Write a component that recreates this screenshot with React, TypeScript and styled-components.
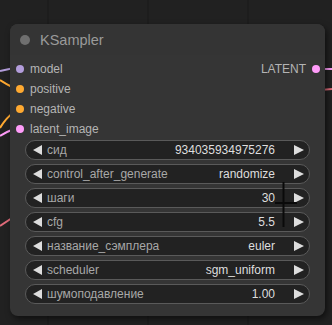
import React from "react";
import styled, { createGlobalStyle } from "styled-components";

const Global = createGlobalStyle`
  html, body { margin: 0; padding: 0; background: #202020; }
  body { font-family: "Liberation Sans", Arial, sans-serif; }
`;

const Page = styled.div`
  position: relative;
  width: 332px;
  height: 325px;
  overflow: hidden;
  background: #212121;
  padding-top: 24px;
  padding-left: 10px;
  box-sizing: border-box;
`;

const Backdrop = styled.svg`
  position: absolute;
  left: 0;
  top: 0;
  width: 332px;
  height: 325px;
`;

const Overlay = styled.svg`
  position: absolute;
  left: 0;
  top: 0;
  width: 332px;
  height: 325px;
  pointer-events: none;
`;

const Node = styled.div`
  position: relative;
  width: 315px;
  height: 292px;
  background: #353535;
  border-radius: 8px;
  box-shadow: 2px 3px 6px rgba(0, 0, 0, 0.55);
  display: flex;
  flex-direction: column;
`;

const Title = styled.div`
  height: 31px;
  display: flex;
  align-items: center;
  padding-left: 10px;
  gap: 10px;
  background: #343434;
  border-radius: 8px 8px 0 0;
  color: #9a9a9a;
  font-size: 14.5px;
`;

const TitleDot = styled.span`
  width: 10px;
  height: 10px;
  border-radius: 50%;
  background: #6f6f6f;
`;

const Slots = styled.div`
  padding-top: 4px;
  display: flex;
  flex-direction: column;
`;

const SlotRow = styled.div`
  height: 20px;
  display: flex;
  align-items: center;
  justify-content: space-between;
`;

const Slot = styled.div<{ $right?: boolean }>`
  display: flex;
  align-items: center;
  flex-direction: ${(p) => (p.$right ? "row-reverse" : "row")};
  gap: 6px;
  padding: ${(p) => (p.$right ? "0 5px 0 0" : "0 0 0 6px")};
  color: #b4b4b4;
  font-size: 12px;
`;

const Dot = styled.span<{ $c: string }>`
  width: 8px;
  height: 8px;
  border-radius: 50%;
  background: ${(p) => p.$c};
`;

const Widgets = styled.div`
  margin-top: 1px;
  padding: 0 15px;
  display: flex;
  flex-direction: column;
  gap: 4px;
`;

const Widget = styled.div`
  height: 20px;
  box-sizing: border-box;
  border: 1px solid #5a5a5a;
  border-radius: 10px;
  background: #222222;
  display: flex;
  align-items: center;
  padding: 0 5px 0 7px;
  font-size: 12px;
`;

const Arrow = styled.span<{ $dir: "l" | "r" }>`
  width: 0;
  height: 0;
  border-top: 5px solid transparent;
  border-bottom: 5px solid transparent;
  ${(p) =>
    p.$dir === "l"
      ? "border-right: 9px solid #dddddd;"
      : "border-left: 10px solid #dddddd;"}
`;

const Label = styled.span`
  margin-left: 5px;
  color: #a8a8a8;
  flex: 1;
`;

const Value = styled.span`
  color: #dedede;
  margin-right: 19px;
`;

const inputs = [
  { name: "model", color: "#b39ddb" },
  { name: "positive", color: "#ffa931" },
  { name: "negative", color: "#ffa931" },
  { name: "latent_image", color: "#ff9cf9" },
];

const widgets = [
  ["сид", "934035934975276"],
  ["control_after_generate", "randomize"],
  ["шаги", "30"],
  ["cfg", "5.5"],
  ["название_сэмплера", "euler"],
  ["scheduler", "sgm_uniform"],
  ["шумоподавление", "1.00"],
];

export default function App() {
  return (
    <>
      <Global />
      <Page>
        <Backdrop>
          <g stroke="#1c1c1c" strokeWidth="1.5">
            <line x1="48" y1="0" x2="48" y2="325" />
            <line x1="148" y1="0" x2="148" y2="325" />
            <line x1="248" y1="0" x2="248" y2="325" />
          </g>
          <g fill="none" strokeWidth="2">
            <path d="M0 71 L14 68" stroke="#b39ddb" />
            <path d="M0 80 Q6 84 14 88" stroke="#ffa931" />
            <path d="M0 128 Q6 118 14 112" stroke="#ffa931" />
            <path d="M0 136 Q6 132 14 129" stroke="#ff9cf9" />
            <path d="M0 226 L12 218" stroke="#e06b7a" />
            <path d="M320 69 L332 69" stroke="#ff9cf9" />
            <path d="M320 90 L332 89" stroke="#e06b7a" />
          </g>
        </Backdrop>
        <Node>
          <Title>
            <TitleDot />
            KSampler
          </Title>
          <Slots>
            {inputs.map((inp, i) => (
              <SlotRow key={inp.name}>
                <Slot>
                  <Dot $c={inp.color} />
                  {inp.name}
                </Slot>
                {i === 0 && (
                  <Slot $right>
                    <Dot $c="#ff9cf9" />
                    LATENT
                  </Slot>
                )}
              </SlotRow>
            ))}
          </Slots>
          <Widgets>
            {widgets.map(([l, v]) => (
              <Widget key={l}>
                <Arrow $dir="l" />
                <Label>{l}</Label>
                <Value>{v}</Value>
                <Arrow $dir="r" />
              </Widget>
            ))}
          </Widgets>
        </Node>
        <Overlay>
          <line x1="283.5" y1="182" x2="283.5" y2="227" stroke="#0a0a0a" strokeWidth="2" />
          <line x1="275" y1="203" x2="297" y2="203" stroke="#0a0a0a" strokeWidth="2" />
        </Overlay>
      </Page>
    </>
  );
}
